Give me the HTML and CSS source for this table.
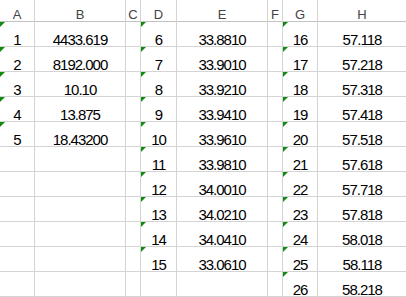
FILE: index.html
```html
<!DOCTYPE html>
<html>
<head>
<meta charset="utf-8">
<link rel="stylesheet" href="styles.css">
</head>
<body>
<div class="sheet">
  <div class="hd">A</div><div class="hd">B</div><div class="hd">C</div><div class="hd">D</div><div class="hd">E</div><div class="hd">F</div><div class="hd">G</div><div class="hd">H</div>

  <div class="c t">1</div><div class="c">4433.619</div><div class="c"></div><div class="c t">6</div><div class="c">33.8810</div><div class="c"></div><div class="c t">16</div><div class="c">57.118</div>
  <div class="c t">2</div><div class="c">8192.000</div><div class="c"></div><div class="c t">7</div><div class="c">33.9010</div><div class="c"></div><div class="c t">17</div><div class="c">57.218</div>
  <div class="c t">3</div><div class="c">10.10</div><div class="c"></div><div class="c t">8</div><div class="c">33.9210</div><div class="c"></div><div class="c t">18</div><div class="c">57.318</div>
  <div class="c t">4</div><div class="c">13.875</div><div class="c"></div><div class="c t">9</div><div class="c">33.9410</div><div class="c"></div><div class="c t">19</div><div class="c">57.418</div>
  <div class="c t">5</div><div class="c">18.43200</div><div class="c"></div><div class="c t">10</div><div class="c">33.9610</div><div class="c"></div><div class="c t">20</div><div class="c">57.518</div>
  <div class="c"></div><div class="c"></div><div class="c"></div><div class="c t">11</div><div class="c">33.9810</div><div class="c"></div><div class="c t">21</div><div class="c">57.618</div>
  <div class="c"></div><div class="c"></div><div class="c"></div><div class="c t">12</div><div class="c">34.0010</div><div class="c"></div><div class="c t">22</div><div class="c">57.718</div>
  <div class="c"></div><div class="c"></div><div class="c"></div><div class="c t">13</div><div class="c">34.0210</div><div class="c"></div><div class="c t">23</div><div class="c">57.818</div>
  <div class="c"></div><div class="c"></div><div class="c"></div><div class="c t">14</div><div class="c">34.0410</div><div class="c"></div><div class="c t">24</div><div class="c">58.018</div>
  <div class="c"></div><div class="c"></div><div class="c"></div><div class="c t">15</div><div class="c">33.0610</div><div class="c"></div><div class="c t">25</div><div class="c">58.118</div>
  <div class="c"></div><div class="c"></div><div class="c"></div><div class="c"></div><div class="c"></div><div class="c"></div><div class="c t">26</div><div class="c">58.218</div>
</div>
</body>
</html>
```
FILE: styles.css
```css
html, body {
  margin: 0;
  padding: 0;
  background: #ffffff;
  overflow: hidden;
}
.sheet {
  display: grid;
  grid-template-columns: 34px 90px 14px 35px 90px 14px 34px 88px;
  grid-template-rows: 21px repeat(11, 24px);
  gap: 1px;
  padding-bottom: 1px;
  background: #d4d4d4;
  width: max-content;
  font-family: "Liberation Sans", Arial, sans-serif;
}
.hd {
  background: #ffffff;
  display: flex;
  align-items: flex-end;
  justify-content: center;
  font-size: 13px;
  line-height: 13px;
  color: #444444;
  box-shadow: 0 1px 0 #c2c2c2;
}
.c {
  position: relative;
  background: #ffffff;
  display: flex;
  align-items: flex-end;
  justify-content: center;
  font-size: 15px;
  line-height: 13px;
  letter-spacing: -1px;
  color: #000000;
  white-space: nowrap;
}
.t::before {
  content: "";
  position: absolute;
  top: 0;
  left: 0;
  width: 0;
  height: 0;
  border-top: 5px solid #118a11;
  border-right: 5px solid transparent;
}
```
